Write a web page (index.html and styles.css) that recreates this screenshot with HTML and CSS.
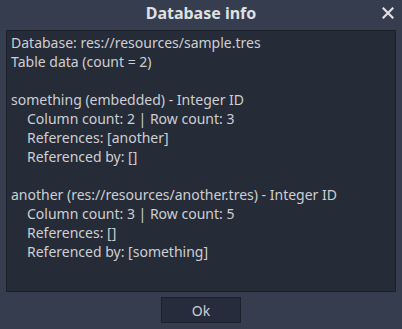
FILE: index.html
```html
<!DOCTYPE html>
<html lang="en">
<head>
    <meta charset="UTF-8">
    <title>Database info</title>
    <link rel="stylesheet" href="styles.css">
</head>
<body>
    <div class="dialog">
        <div class="title-bar">
            <span class="title">Database info</span>
            <svg class="close" width="12" height="12" viewBox="0 0 12 12">
                <path d="M1.5 1.5 L10.5 10.5 M10.5 1.5 L1.5 10.5" stroke="#e0e0e0" stroke-width="2.2" stroke-linecap="square"/>
            </svg>
        </div>

        <div class="info-box">
            <div class="line">Database: res://resources/sample.tres</div>
            <div class="line">Table data (count = 2)</div>
            <div class="line blank"></div>
            <div class="line">something (embedded) - Integer ID</div>
            <div class="line sub">Column count: 2 | Row count: 3</div>
            <div class="line sub">References: [another]</div>
            <div class="line sub">Referenced by: []</div>
            <div class="line blank"></div>
            <div class="line">another (res://resources/another.tres) - Integer ID</div>
            <div class="line sub">Column count: 3 | Row count: 5</div>
            <div class="line sub">References: []</div>
            <div class="line sub">Referenced by: [something]</div>
        </div>

        <div class="buttons">
            <button class="ok-btn">Ok</button>
        </div>
    </div>
</body>
</html>
```

FILE: styles.css
```css
body {
    margin: 0;
    padding: 0;
    background-color: #363d4f;
    font-family: "Noto Sans", sans-serif;
    color: #cdcfd3;
    overflow: hidden;
}
.dialog {
    width: 402px;
    height: 329px;
    display: flex;
    flex-direction: column;
}
.title-bar {
    position: relative;
    height: 28px;
    display: flex;
    align-items: center;
    justify-content: center;
}
.title {
    font-weight: bold;
    font-size: 16px;
    color: #dfe0e3;
    margin-top: -2px;
}
.close {
    position: absolute;
    right: 8px;
    top: 7px;
}
.info-box {
    margin: 2px 6px 0 6px;
    height: 262px;
    box-sizing: border-box;
    background-color: #262b38;
    border: 1px solid #1b1f29;
    padding: 2px 4px;
    font-size: 14px;
}
.line {
    height: 19px;
    line-height: 19px;
    white-space: nowrap;
}
.sub {
    padding-left: 16px;
}
.buttons {
    display: flex;
    justify-content: center;
    margin-top: 5px;
}
.ok-btn {
    width: 80px;
    height: 26px;
    background-color: #262c3b;
    border: 1px solid #1c202b;
    color: #cdcfd3;
    font-family: "Noto Sans", sans-serif;
    font-size: 14px;
    padding: 0;
}
```
